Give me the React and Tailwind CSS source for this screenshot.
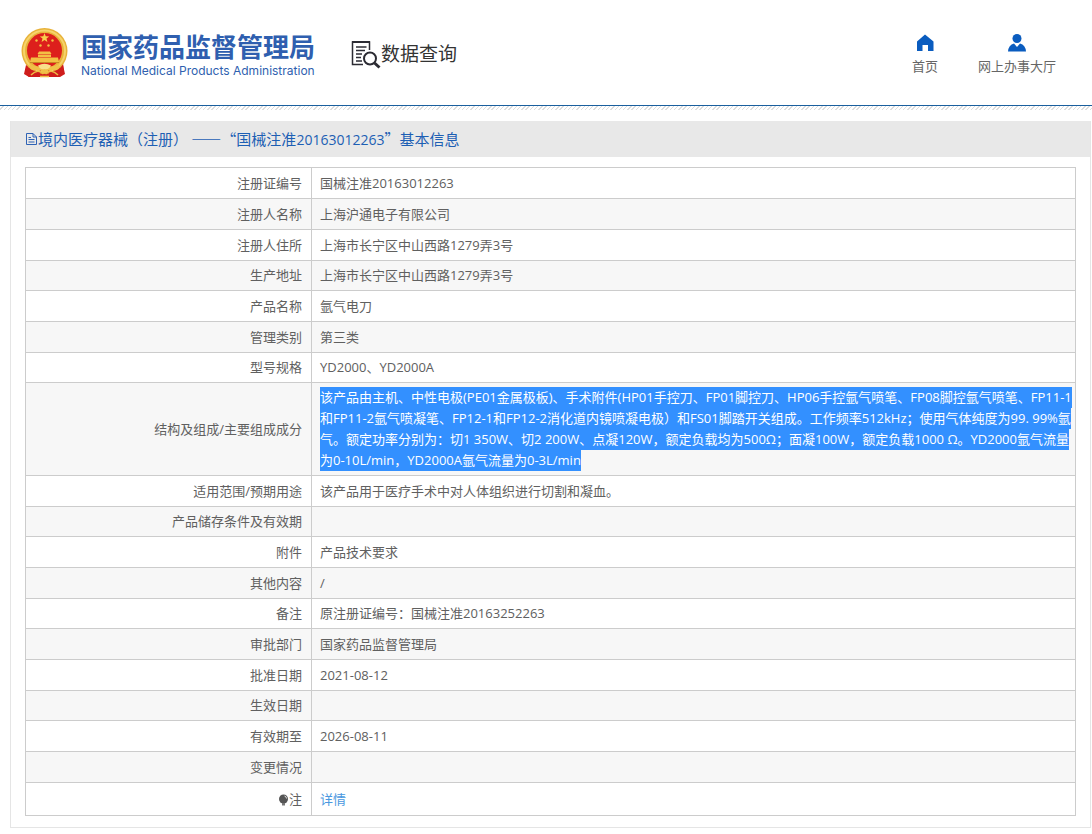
import React from 'react';

const rows = [
  { label: '注册证编号', value: '国械注准20163012263' },
  { label: '注册人名称', value: '上海沪通电子有限公司' },
  { label: '注册人住所', value: '上海市长宁区中山西路1279弄3号' },
  { label: '生产地址', value: '上海市长宁区中山西路1279弄3号' },
  { label: '产品名称', value: '氩气电刀' },
  { label: '管理类别', value: '第三类' },
  { label: '型号规格', value: 'YD2000、YD2000A' },
  {
    label: '结构及组成/主要组成成分',
    selected: true,
    lines: [
      '该产品由主机、中性电极(PE01金属极板)、手术附件(HP01手控刀、FP01脚控刀、HP06手控氩气喷笔、FP08脚控氩气喷笔、FP11-1',
      '和FP11-2氩气喷凝笔、FP12-1和FP12-2消化道内镜喷凝电极）和FS01脚踏开关组成。工作频率512kHz；使用气体纯度为99. 99%氩',
      '气。额定功率分别为：切1 350W、切2 200W、点凝120W，额定负载均为500Ω；面凝100W，额定负载1000 Ω。YD2000氩气流量',
      '为0-10L/min，YD2000A氩气流量为0-3L/min',
    ],
  },
  { label: '适用范围/预期用途', value: '该产品用于医疗手术中对人体组织进行切割和凝血。' },
  { label: '产品储存条件及有效期', value: '' },
  { label: '附件', value: '产品技术要求' },
  { label: '其他内容', value: '/' },
  { label: '备注', value: '原注册证编号：国械注准20163252263' },
  { label: '审批部门', value: '国家药品监督管理局' },
  { label: '批准日期', value: '2021-08-12' },
  { label: '生效日期', value: '' },
  { label: '有效期至', value: '2026-08-11' },
  { label: '变更情况', value: '' },
];

const Emblem = () => (
  <svg width="48" height="52" viewBox="0 0 48 52" aria-hidden="true">
    <path d="M6 36 L4 46 L8 50 H38 L43 46 L42 36 Z" fill="#d3201f" />
    <circle cx="23.5" cy="24" r="23" fill="#e8b23a" />
    <circle cx="23.5" cy="24" r="20.5" fill="none" stroke="#f6d36a" strokeWidth="2" />
    <circle cx="23.5" cy="23.5" r="17.5" fill="#dd1f1c" />
    <path d="M23.5 6 l1.200 3.300 3.500 .1 -2.700 2.200 .9 3.400 -2.900-1.900 -2.900 1.900 .9-3.400 -2.700-2.200 3.500-.1z" fill="#f8d04e" />
    <g fill="#f3c044">
      <circle cx="15.5" cy="13.5" r="1.200" />
      <circle cx="31.5" cy="13.5" r="1.200" />
      <circle cx="19.5" cy="18.5" r="1.200" />
      <circle cx="27.5" cy="18.5" r="1.200" />
      <path d="M18 24.500 h11 l1.500 2.500 h-14z M17 27.500 h13 v2.500 h-13z M10 30.500 h27 l1 4.500 h-29z" />
    </g>
    <path d="M9 35.500 H38" stroke="#c98a24" strokeWidth="1" />
    <path d="M8 36 Q16 42 23.500 38 Q31 42 39 36 L37 44 Q30 41 23.500 46 Q17 41 10 44 Z" fill="#f0c048" />
    <path d="M17 38.500 Q23.500 35 30 38.500 Q28 43 23.500 42 Q19 43 17 38.500 Z" fill="#f9e08a" />
    <path d="M5 38 Q11 46 20 43.500 L18 50 H8 L3 47 Z M42 38 Q36 46 27 43.500 L29 50 H39 L44 47 Z" fill="#cf1d1c" />
    <path d="M10 48 Q17 41 22.500 47 M37 48 Q30 41 24.500 47 M19 49.500 H28" fill="none" stroke="#eebc45" strokeWidth="1.500" />
  </svg>
);

const SearchDocIcon = () => (
  <svg width="30" height="30" viewBox="0 0 30 30" fill="none" stroke="#2b2b33" aria-hidden="true">
    <path d="M12 24.500 H1.500 V2 H18.500 V10" strokeWidth="1.500" />
    <path d="M1 2 H19" strokeWidth="2" />
    <path d="M5 7 H15.500 M5 10.500 H14 M5 14 H11 M5 17.500 H10 M5 21 H11" strokeWidth="1.400" />
    <circle cx="19" cy="18.500" r="6" strokeWidth="2" />
    <path d="M23.500 23 L28.500 27.500" strokeWidth="3" />
  </svg>
);

const HomeIcon = () => (
  <svg width="18" height="18" viewBox="0 0 18 18" fill="#0a5cbf" aria-hidden="true">
    <path d="M9 0.500 L17.500 7.500 V17 H12 V11 H6.500 V17 H1 V7.500 Z" />
  </svg>
);

const UserIcon = () => (
  <svg width="18" height="18" viewBox="0 0 18 18" fill="#0a5cbf" aria-hidden="true">
    <circle cx="9" cy="4.500" r="4.500" />
    <path d="M0 17.500 Q0.500 11 6 9.500 L9 13 L12 9.500 Q17.500 11 18 17.500 Z" />
  </svg>
);

const DocIcon = () => (
  <svg width="13" height="14" viewBox="0 0 13 14" fill="none" stroke="#2f63b5" aria-hidden="true">
    <path d="M1.500 1.500 H8 L11.500 5 V12.500 H1.500 Z M8 1.500 V5 H11.500 M3.500 5.500 H6 M3.500 7.500 H9.500 M3.500 10 H9.500" />
  </svg>
);

const BulbIcon = () => (
  <svg className="inline-block" width="11" height="12" viewBox="0 0 11 12" aria-hidden="true">
    <circle cx="5.500" cy="5" r="4.500" fill="#555" />
    <path d="M4 9 H7 V11.500 H4 Z" fill="#777" />
    <path d="M6.500 2 Q8.500 2.500 8.500 4.500" fill="none" stroke="#ddd" />
  </svg>
);

const NavItem = ({ icon: Icon, label }) => (
  <a href="#" className="flex flex-col items-center gap-1 text-[13px] leading-5 text-[#666]">
    <Icon />
    <span>{label}</span>
  </a>
);

const Row = ({ label, children }) => (
  <tr className="h-[31px] even:bg-[#f7f7f7] nth-[3n+4]:not-last:h-[30px] last:h-[33px]">
    <th scope="row" className="border border-[#ccc] pr-[9px] text-right font-normal">{label}</th>
    <td className="border border-[#ccc] pl-2">{children}</td>
  </tr>
);

export default function App() {
  return (
    <div className="bg-white font-['Open_Sans','Noto_Sans_CJK_SC',sans-serif] text-[13px] leading-[21px] text-[#606060]">
      <header className="flex h-[106px] items-center border-b border-[#1a5f9e] pr-9 pl-[21px]">
        <div className="flex items-center gap-3">
          <Emblem />
          <div className="pt-1 text-[#2f5faf]">
            <h1 className="text-[26px] leading-8 font-bold">国家药品监督管理局</h1>
            <p className="font-[Inter,sans-serif] text-[12px] leading-4">National Medical Products Administration</p>
          </div>
        </div>
        <div className="ml-9 flex items-center pt-1 text-[19px] text-[#333]">
          <SearchDocIcon />
          <span>数据查询</span>
        </div>
        <nav className="ml-auto flex gap-10 pt-1">
          <NavItem icon={HomeIcon} label="首页" />
          <NavItem icon={UserIcon} label="网上办事大厅" />
        </nav>
      </header>
      <div className="h-1 bg-[repeating-linear-gradient(135deg,#fff_0px,#fff_2px,#ddd_2px,#ddd_3px)]" />

      <main className="mt-[11px] mr-px ml-[10px] border border-t-0 border-[#e5e5e5]">
        <h2 className="flex h-9 items-center bg-[#e8e8e8] pl-[14px] font-['Noto_Sans_CJK_SC',sans-serif] text-[15px] text-[#1d5fb4]">
          <DocIcon />
          <span lang="zh-CN">
            境内医疗器械（注册） ——“国械注准
            <span className="font-['Open_Sans',sans-serif] text-[14px]">20163012263</span>
            ”基本信息
          </span>
        </h2>
        <div className="px-[14px] pt-[10px] pb-[11px]">
          <table className="w-full table-fixed border-collapse">
            <colgroup>
              <col className="w-[286px]" />
              <col />
            </colgroup>
            <tbody>
              {rows.map((row) => (
                <Row key={row.label} label={row.label}>
                  {row.selected ? (
                    <div className="py-1 whitespace-nowrap text-white">
                      {row.lines.map((line) => (
                        <div key={line} className="w-fit bg-[#3390ff]">{line}</div>
                      ))}
                    </div>
                  ) : (
                    row.value
                  )}
                </Row>
              ))}
              <Row label={<><BulbIcon />注</>}>
                <a href="#" className="text-[#4a98e0]">详情</a>
              </Row>
            </tbody>
          </table>
        </div>
      </main>
    </div>
  );
}
